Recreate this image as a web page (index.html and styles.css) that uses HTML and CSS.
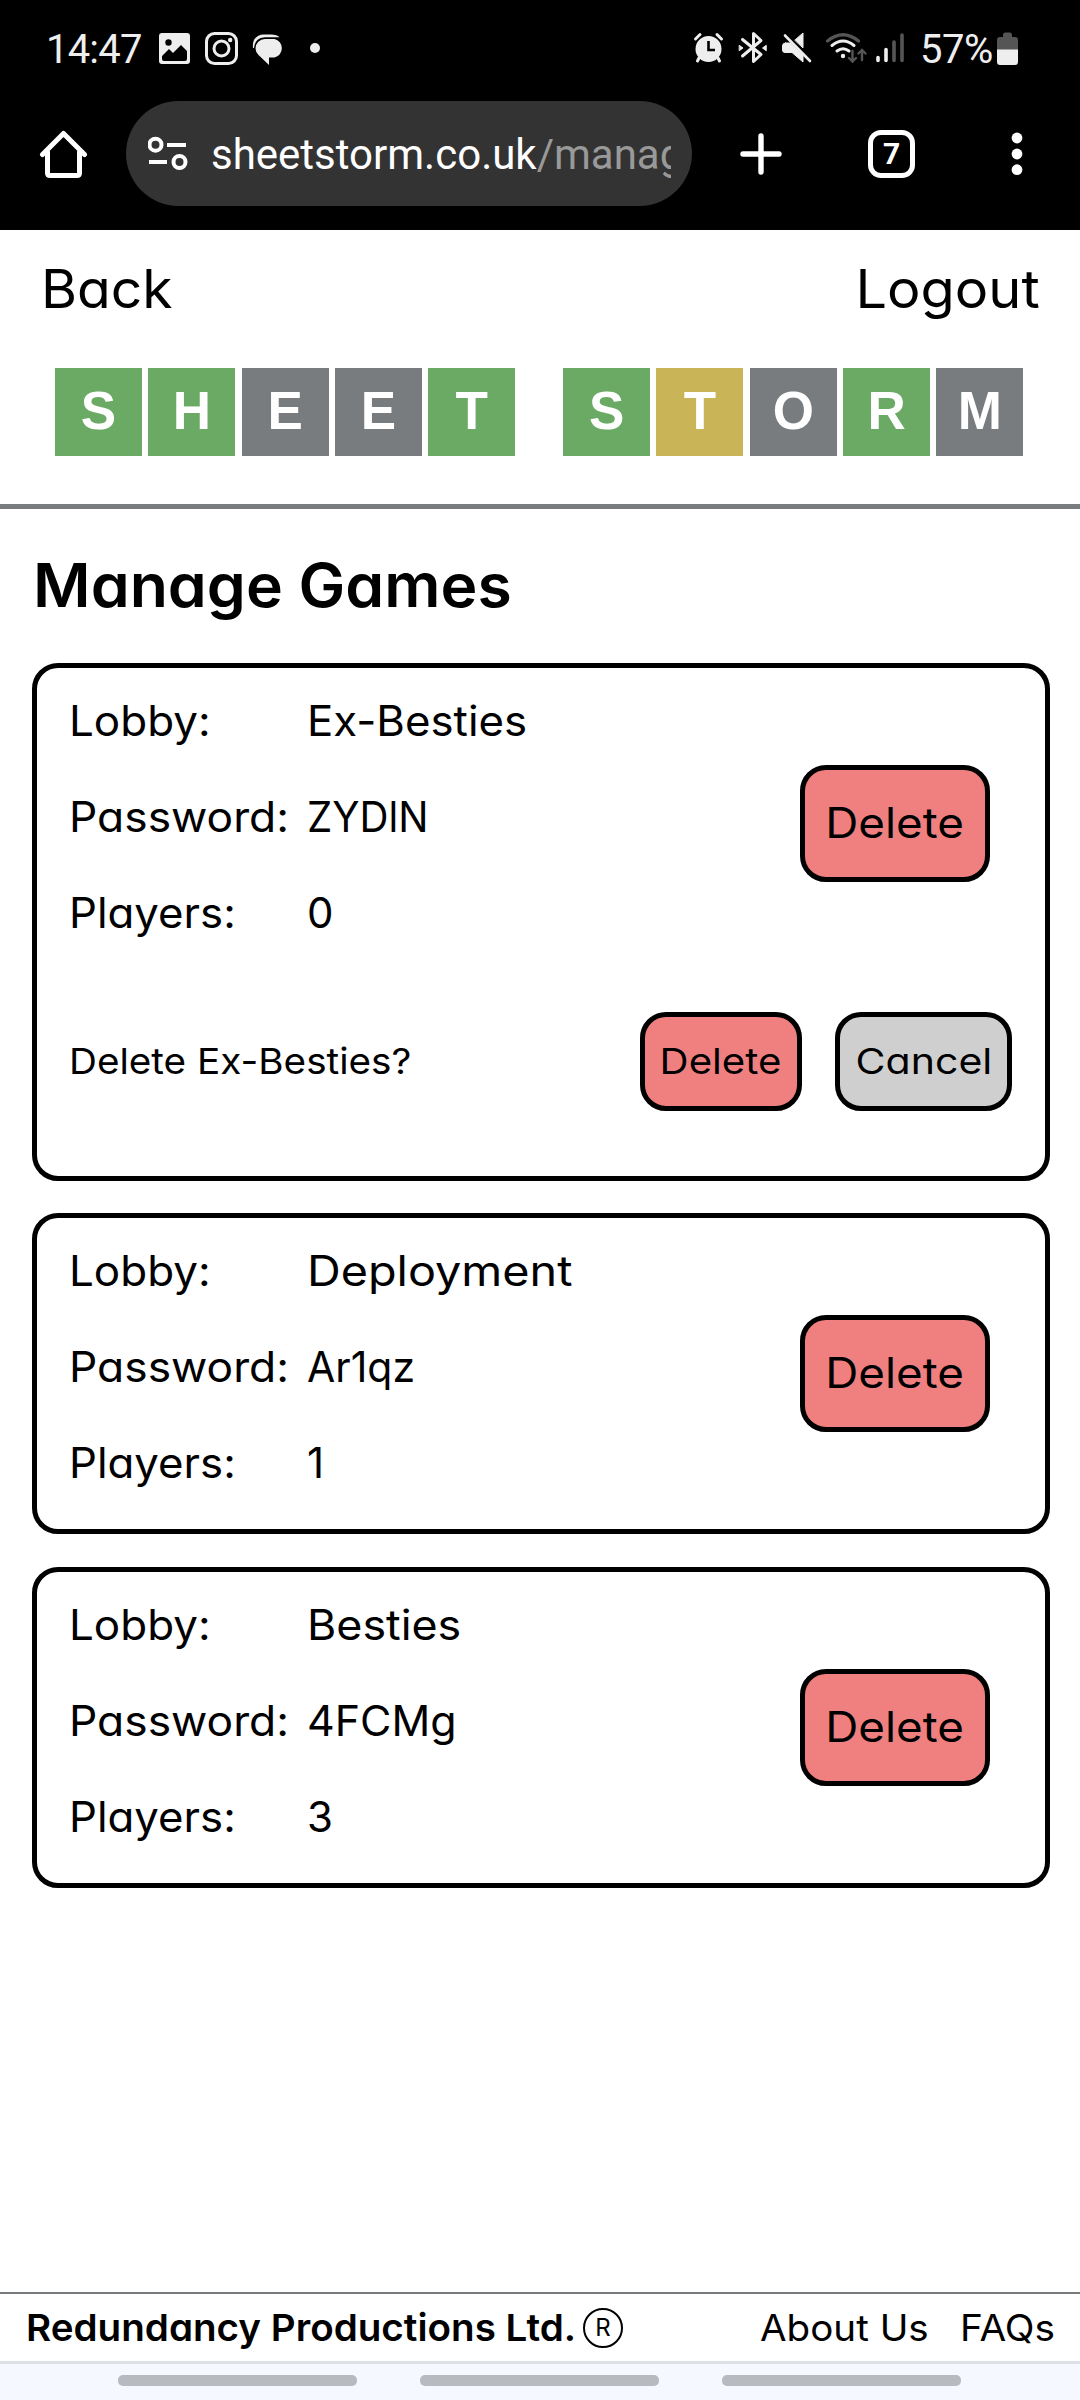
FILE: index.html
```html
<!DOCTYPE html>
<html lang="en">
<head>
<meta charset="utf-8">
<title>Sheetstorm - Manage Games</title>
<link rel="stylesheet" href="styles.css">
</head>
<body>
<div class="chrome">
  <div class="status">
    <span class="clock">14:47</span>
    <svg class="status-left" width="170" height="40" viewBox="155 30 170 40" fill="#eee">
      <path fill-rule="evenodd" d="M162 34H187Q190 34 190 37V62Q190 65 187 65H162Q159 65 159 62V37Q159 34 162 34ZM162 60Q162 62 164 62H185Q187 62 187 60V52L181 46L173 54L169 50L162 57ZM168.500 40.300A3.200 3.200 0 1 0 168.500 46.700A3.200 3.200 0 1 0 168.500 40.300Z"/>
      <g fill="none" stroke="#eee" stroke-width="3"><rect x="206.500" y="34.500" width="30" height="30" rx="8"/><circle cx="221.500" cy="49.500" r="7.500"/></g>
      <circle cx="230.200" cy="41" r="2.200"/>
      <path d="M253 49C252 40 257 35.500 264 35.500H271Q277 35.500 279.500 38.300H265Q255 38.500 254 49Z"/>
      <path d="M265 40H274.500A9.500 9.500 0 0 1 274.500 58.500H269V66L258.500 56Q255.500 53 255.500 49.500A9.500 9.500 0 0 1 265 40Z"/>
      <circle cx="315" cy="49" r="5"/>
    </svg>
    <svg class="status-right" width="222" height="40" viewBox="690 30 222 40" fill="none" stroke="#eee" stroke-linecap="round">
      <circle cx="708.500" cy="50" r="13" fill="#eee" stroke="none"/>
      <path d="M695.500 40L700 35.500M721.500 40L717 35.500M699 59L697.500 62M718 59L719.500 62" stroke-width="3"/>
      <path d="M708.500 42V51H715" stroke="#000" stroke-width="2.600" stroke-linecap="butt"/>
      <path d="M742.500 40.500L761 55.500L753.500 62.500V34.500L761 41.500L742.500 57" stroke-width="3" stroke-linejoin="round"/>
      <path d="M739.500 46.500L743 49L739.500 51.500ZM766 46.500L762.500 49L766 51.500Z" fill="#eee" stroke-width="1"/>
      <path d="M785.500 44H790L803 57V63L792 53.500H785Q782.500 53.500 782.500 51V47Q782.500 44 785.500 44ZM795 41L803 34V48.500Z" fill="#eee" stroke-width="1"/>
      <path d="M785 36.500L810 62" stroke-width="2.600"/>
      <path d="M827.500 42Q843 29.500 858.500 42" stroke="#555" stroke-width="3.200"/>
      <path d="M832 46.500Q843 37.500 854 46.500M837 52Q843 47.500 849 52" stroke-width="3"/>
      <circle cx="843" cy="57" r="2.200" fill="#eee" stroke="none"/>
      <path d="M852.500 52V62M849 59L852.500 62.500L856 59M862 61V51M858.500 54.500L862 51L865.500 54.500" stroke="#555" stroke-width="2.400"/>
      <path d="M878 58.500V61.500M886 50.500V61.500" stroke-width="3.600"/>
      <path d="M894 43V61.500M902 36V61.500" stroke="#555" stroke-width="3.600"/>
    </svg>
    <span class="percent">57%</span>
    <svg class="battery" width="22" height="34" viewBox="0 0 22 34"><path d="M6 3Q6 0.500 8 0.500H13Q15 0.500 15 3V5H18Q21 5 21 8V18H0V8Q0 5 3 5H6Z" fill="#555"/><path d="M0 17.500H21V30Q21 33 18 33H3Q0 33 0 30Z" fill="#eee"/></svg>
  </div>
  <div class="toolbar">
    <svg class="home" width="50" height="50" viewBox="38 128 50 50" fill="none" stroke="#fff" stroke-width="5" stroke-linecap="round" stroke-linejoin="round"><path d="M42.500 153.500L63.500 132.500L84.500 153.500M47.500 151V172Q47.500 174.500 50 174.500H77Q79.500 174.500 79.500 172V151"/></svg>
    <div class="address">
      <svg width="40" height="36" viewBox="148 136 40 36" fill="none" stroke="#fff" stroke-width="4"><circle cx="155.500" cy="144.700" r="6"/><path d="M167 145H186M149 162H167"/><circle cx="179.500" cy="162" r="6"/></svg>
      <div class="url">sheetstorm.co.uk<span>/manag</span></div>
    </div>
    <svg class="plus" width="42" height="42" viewBox="0 0 42 42" stroke="#fff" stroke-width="5.400" stroke-linecap="round"><path d="M21 3V39M3 21H39"/></svg>
    <div class="tabs">7</div>
    <svg class="dots" width="12" height="44" viewBox="0 0 12 44" fill="#fff"><circle cx="6" cy="6" r="5.400"/><circle cx="6" cy="22" r="5.400"/><circle cx="6" cy="37.700" r="5.400"/></svg>
  </div>
</div>
<header class="site-header">
  <nav class="top-nav"><a class="back">Back</a><a class="logout">Logout</a></nav>
  <div class="logo">
    <div class="word"><b class="g">S</b><b class="g">H</b><b>E</b><b>E</b><b class="g">T</b></div>
    <div class="word"><b class="g">S</b><b class="y">T</b><b>O</b><b class="g">R</b><b>M</b></div>
  </div>
</header>
<main>
  <h1>Manage Games</h1>
  <section class="card">
    <div class="game">
      <dl>
        <dt class="lobby">Lobby:</dt><dd class="ex-besties">Ex-Besties</dd>
        <dt class="password">Password:</dt><dd class="code-tight">ZYDlN</dd>
        <dt class="players">Players:</dt><dd>0</dd>
      </dl>
      <button class="delete"><span>Delete</span></button>
    </div>
    <div class="confirm">
      <p>Delete Ex-Besties?</p>
      <button class="yes"><span>Delete</span></button>
      <button class="cancel"><span>Cancel</span></button>
    </div>
  </section>
  <section class="card">
    <div class="game">
      <dl>
        <dt class="lobby">Lobby:</dt><dd class="deployment">Deployment</dd>
        <dt class="password">Password:</dt><dd class="code">Ar1qz</dd>
        <dt class="players">Players:</dt><dd>1</dd>
      </dl>
      <button class="delete"><span>Delete</span></button>
    </div>
  </section>
  <section class="card">
    <div class="game">
      <dl>
        <dt class="lobby">Lobby:</dt><dd class="besties">Besties</dd>
        <dt class="password">Password:</dt><dd class="code-wide">4FCMg</dd>
        <dt class="players">Players:</dt><dd>3</dd>
      </dl>
      <button class="delete"><span>Delete</span></button>
    </div>
  </section>
</main>
<footer>
  <strong class="company">Redundancy Productions Ltd.</strong><span class="reg">R</span>
  <a class="about">About Us</a><a class="faqs">FAQs</a>
</footer>
<div class="gesture"><i></i><i></i><i></i></div>
</body>
</html>
```
FILE: styles.css
```css
* { box-sizing: border-box; }
body { margin: 0; width: 1080px; height: 2400px; display: flex; flex-direction: column; background: #fff; color: #000; font-family: Inter, "Open Sans", sans-serif; font-feature-settings: "cv11"; overflow: hidden; }
svg { display: block; flex: none; }

/* Browser chrome */
.chrome { height: 230px; background: #000; color: #eee; font-family: Roboto, sans-serif; flex: none; }
.status { height: 98px; display: flex; align-items: center; padding-left: 46px; }
.clock { font-size: 40px; letter-spacing: -0.8px; width: 109px; flex: none; }
.status-right { margin-left: 365px; }
.percent { font-size: 40px; letter-spacing: -0.5px; width: 85px; padding-left: 8px; flex: none; }
.toolbar { height: 111px; display: flex; align-items: center; padding-left: 38px; color: #fff; }
.address { width: 566px; height: 105px; margin-left: 38px; border-radius: 53px; background: #333; display: flex; align-items: center; padding: 0 21px 0 22px; gap: 23px; }
.url { font-size: 42px; overflow: hidden; white-space: nowrap; flex: 1; padding-top: 2px; }
.url span { color: #999; }
.plus { margin-left: 48px; }
.tabs { width: 47px; height: 48px; margin-left: 86px; border: 5px solid #fff; border-radius: 13px; font-weight: 700; font-size: 30px; line-height: 38px; text-align: center; }
.dots { margin-left: 96px; }

/* Site header */
.site-header { height: 279px; flex: none; border-bottom: 5px solid #787c7f; }
.top-nav { display: flex; justify-content: space-between; height: 137.5px; padding: 0 40px 0 41px; font-size: 53px; line-height: 118px; }
.back { transform: scaleX(1.04); transform-origin: left; }
.logout { transform: scaleX(1.055); transform-origin: right; }
.logo { display: flex; gap: 48px; padding-left: 55px; }
.word { display: grid; grid-template-columns: repeat(5, 87px); gap: 6.3px; }
.word b { height: 88px; background: #787c7f; color: #fff; font: 700 53px/86px "Liberation Sans", sans-serif; text-align: center; }
.word .g { background: #6aaa64; }
.word .y { background: #c9b458; }

/* Games: the wide letterforms come from a slight horizontal stretch */
main { flex: 1; padding: 0 30px 0 32px; }
h1 { margin: 0; padding-left: 1px; height: 154px; font-size: 60px; font-weight: 600; line-height: 153px; transform: scaleX(1.041); transform-origin: left; }
.card { border: 5px solid #000; border-radius: 26px; margin-bottom: 33px; }
.card:first-of-type { margin-bottom: 32px; }
.game { height: 311px; display: flex; justify-content: space-between; align-items: center; padding: 0 55px 0 32px; }
dl { display: grid; grid-template-columns: 238px auto; margin: -13px 0 0; font-size: 42px; line-height: 96px; white-space: nowrap; }
dt, dd { margin: 0; transform-origin: left; }
.lobby { transform: scaleX(1.047); }
.password { transform: scaleX(1.056); }
.players { transform: scaleX(1.042); }
.ex-besties { transform: scaleX(1.042); }
.deployment { transform: scaleX(1.113); }
.besties { transform: scaleX(1.066); }
.code { transform: scaleX(0.975); }
.code-tight { transform: scaleX(0.956); }
.code-wide { transform: scaleX(1.022); }
button { font: inherit; font-feature-settings: inherit; color: #000; border: 5px solid #000; border-radius: 26px; padding: 0 0 3px; background: #f08080; white-space: nowrap; }
button span { display: inline-block; }
.delete { width: 190px; height: 117px; font-size: 42px; }
.delete span { transform: scaleX(1.091); }
.confirm { height: 197px; display: flex; align-items: center; font-size: 36px; padding: 0 33px 32px 32px; }
.confirm p { margin: 0; flex: 1; padding-bottom: 1px; transform: scaleX(1.074); transform-origin: left; }
.yes { width: 162px; height: 99px; padding-bottom: 1px; }
.yes span { transform: scaleX(1.117); }
.cancel { width: 177px; height: 99px; margin-left: 33px; padding-bottom: 1px; background: #cfcfcf; }
.cancel span { transform: scaleX(1.14); }

/* Footer and system navigation */
footer { height: 69px; flex: none; border-top: 2px solid #787c7f; display: flex; align-items: center; padding-left: 26px; font-size: 36.5px; }
.company { width: 557px; white-space: nowrap; font-size: 37.5px; font-weight: 600; transform: scaleX(1.029); transform-origin: left; }
.reg { width: 40px; height: 40px; border: 2px solid #000; border-radius: 50%; font-size: 24px; line-height: 36px; text-align: center; }
.about { margin-left: 137px; width: 200px; white-space: nowrap; transform: scaleX(1.057); transform-origin: left; }
.faqs { transform: scaleX(1.063); transform-origin: left; }
.gesture { height: 39px; flex: none; border-top: 3px solid #dde1e6; background: #f5f9ff; display: flex; gap: 63px; padding: 11px 118px; }
.gesture i { width: 239px; height: 11px; border-radius: 5px; background: #b7babf; flex: none; }
```
